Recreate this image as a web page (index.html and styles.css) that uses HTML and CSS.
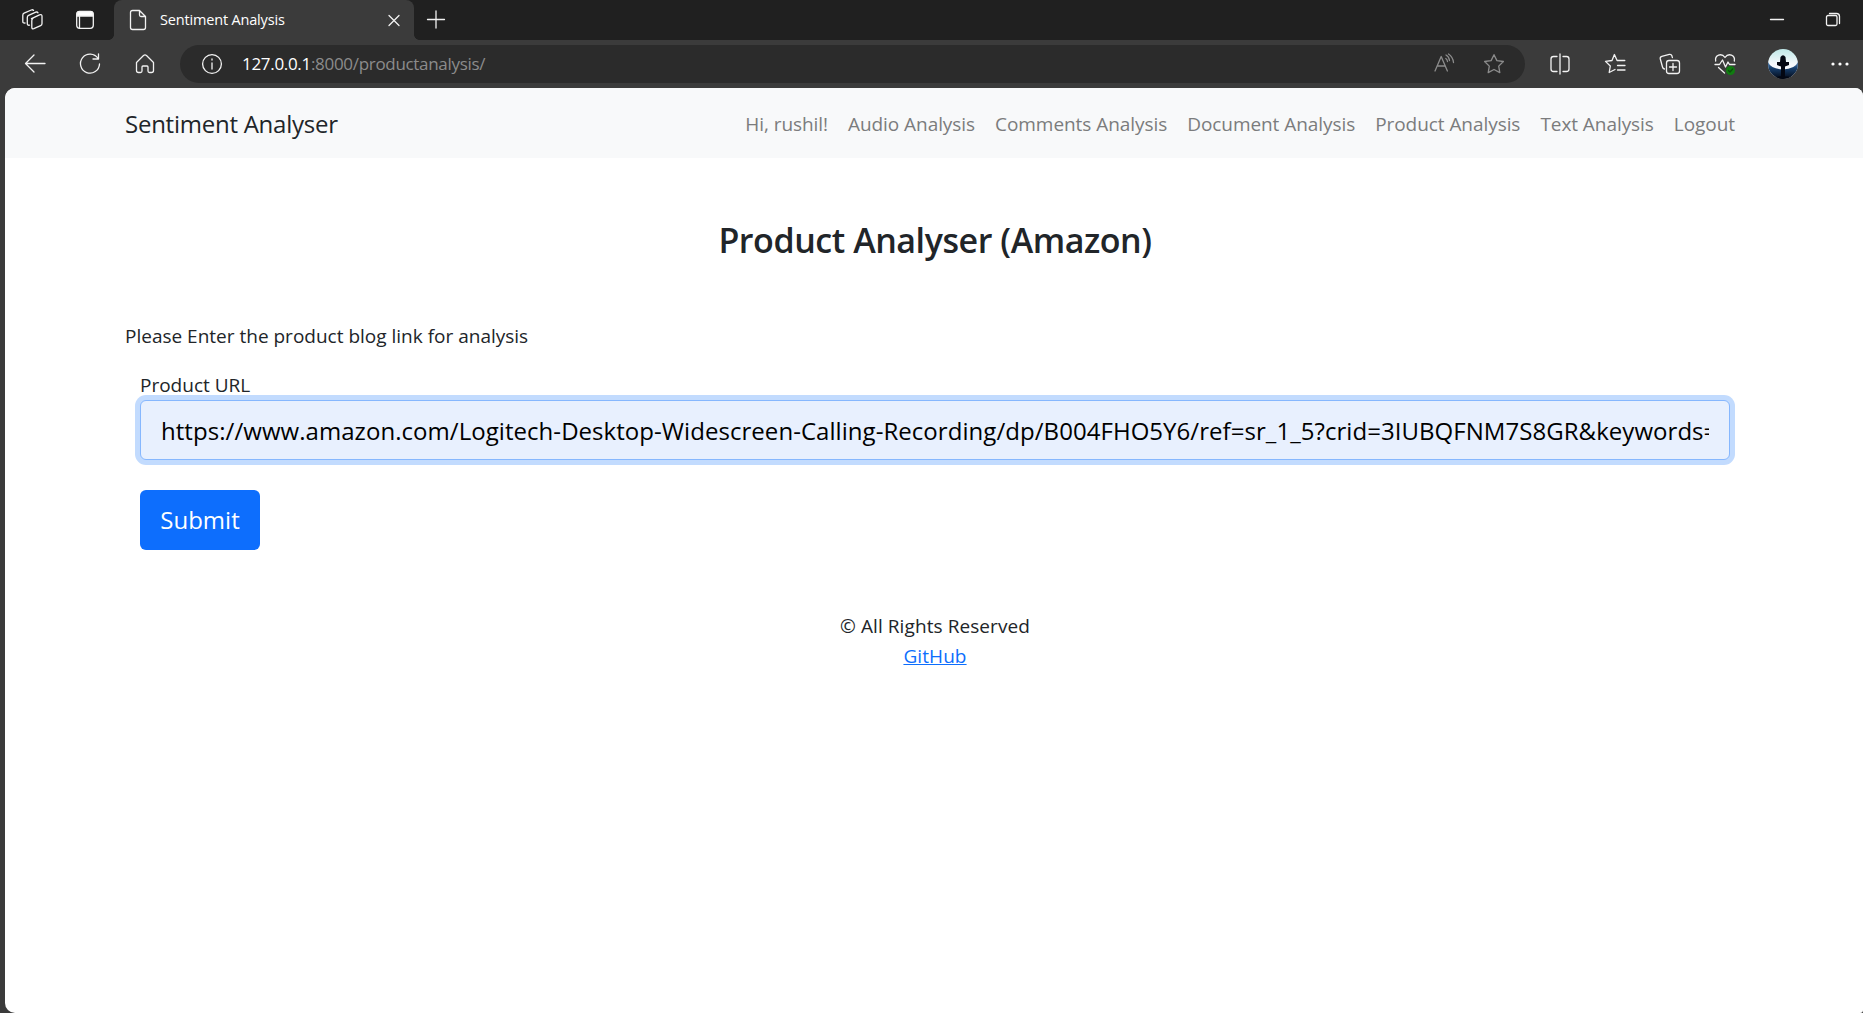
FILE: index.html
```html
<!DOCTYPE html>
<html lang="en">
<head>
<meta charset="utf-8">
<title>Sentiment Analysis</title>
<link rel="stylesheet" href="styles.css">
</head>
<body>
<div class="window">
  <header class="tabbar">
    <svg class="icon workspaces" viewBox="0 0 24 24"><path d="M10.500 10.700l8-3.900q2.500-.8 2.500 1.400v7.200q0 1.600-1.400 2.200l-6.800 3.100q-2 .6-2-1.500v-6.500q0-1.500 1-2.200"/><path d="M8.500 17.200q-2.200.4-2.200-1.600V9.500q0-1.500 1.300-2.100l7.200-3.200q1.500-.6 2.200.6"/><path d="M4 15q-2.200.4-2.200-1.600V7.300q0-1.500 1.300-2.100l7.200-3.200q1.500-.6 2.200.4"/></svg>
    <svg class="icon tabactions" viewBox="0 0 24 24"><rect x="3.700" y="3.700" width="16.600" height="16.600" rx="3"/><path class="solid" d="M4 8V6q0-2.500 2.500-2.500h11Q20 3.500 20 6v2z"/><path d="M6.500 8v12"/></svg>
    <div class="tab">
      <svg class="icon" viewBox="0 0 24 24"><path d="M6.500 2.500h7l6 6v11q0 2-2 2h-11q-2 0-2-2v-15q0-2 2-2zM13.500 2.500v4.500q0 1.500 1.500 1.500h4.500"/></svg>
      <span class="tab-title">Sentiment Analysis</span>
      <svg class="icon" viewBox="0 0 24 24"><path d="M7 7.500l10 10M17 7.500l-10 10"/></svg>
    </div>
    <svg class="icon plus" viewBox="0 0 24 24"><path d="M12 3v17M3.500 11.500h17"/></svg>
    <svg class="icon minimize" viewBox="0 0 24 24"><path d="M5.500 11.500h13"/></svg>
    <svg class="icon restore" viewBox="0 0 24 24"><rect x="5.500" y="7.500" width="10.500" height="10" rx="1.500"/><path d="M8.500 5.500h7q3 0 3 3v7"/></svg>
  </header>
  <div class="toolbar">
    <svg class="icon" viewBox="0 0 24 24"><path d="M22 11.500H2.500M11 3l-8.500 8.500L11 20"/></svg>
    <svg class="icon" viewBox="0 0 24 24"><path d="M20 6.500A9.500 9.500 0 1 0 21.500 12M20.500 1.800v5.200h-5.500"/></svg>
    <svg class="icon" viewBox="0 0 24 24"><path d="M3.500 10.500L10.500 3.500q1.500-1.200 3 0l7 7v8q0 2-2 2h-2q-1.500 0-1.500-1.500v-4q0-1-1-1h-4q-1 0-1 1v4q0 1.500-1.500 1.500h-2q-2 0-2-2z"/></svg>
    <div class="address">
      <svg class="icon" viewBox="0 0 24 24"><circle cx="12" cy="12" r="9.400"/><path d="M12 11v6M12 7v1"/></svg>
      <span class="url"><b>127.0.0.1</b>:8000/productanalysis/</span>
      <svg class="icon dim" viewBox="0 0 24 24"><path d="M3 19L9.200 4.500 15.400 19M5.300 14h8M14 3q3 1.500 3.500 5.500M13.800 6.500q1.500 1 1.700 3M16.500 2q4.500 3 5 8.500"/></svg>
      <svg class="icon dim star" viewBox="0 0 24 24"><path d="M12 2.700l2.900 5.900 6.500.9-4.700 4.600 1.100 6.500-5.800-3.100-5.800 3.100 1.100-6.500-4.700-4.600 6.500-.9z"/></svg>
    </div>
    <svg class="icon split" viewBox="0 0 24 24"><path d="M9 4.500H5.500q-2.500 0-2.500 2.500v10q0 2.500 2.500 2.500H9M15 4.500h3.500q2.500 0 2.500 2.500v10q0 2.500-2.500 2.500H15M12 2v20"/></svg>
    <svg class="icon" viewBox="0 0 24 24"><path d="M12 17.500l-5.800 3 1.100-6.500-4.800-4.600 6.500-.9 2.400-6 2.700 6h7.700M14.500 13.500h7.500M14.500 18h7.500"/></svg>
    <svg class="icon" viewBox="0 0 24 24"><rect x="8.500" y="8.500" width="13" height="13" rx="2.500"/><path d="M15 11.500v7M11.500 15h7M6.500 17q-1.600-.3-2-2L2.300 7q-.5-2 1.500-2.600l7.500-2q2-.4 2.600 1.400l.5 1.800"/></svg>
    <svg class="icon" viewBox="0 0 24 24"><path d="M2.700 9C1.500 3 8.500.5 12 5.500 15.500.5 22.500 3 21.300 9M2 12.500h4.500L9.500 8l3 7 2.500-5 1.500 2.500h5.500M5.500 15.500l6 5.500"/><circle class="badge" cx="17.500" cy="18.500" r="4.500"/><path class="check" d="M15.500 18.500l1.500 1.500 2.700-3"/></svg>
    <svg class="avatar" viewBox="0 0 30 30">
      <defs>
        <clipPath id="round"><circle cx="15" cy="15" r="15"/></clipPath>
        <linearGradient id="sky" x1="0" y1="0" x2="0" y2="1"><stop offset="0" stop-color="#bfe8e8"/><stop offset=".5" stop-color="#f5f8fc"/></linearGradient>
        <linearGradient id="sea" x1="0" y1="0" x2="0" y2="1"><stop offset="0" stop-color="#5c84ae"/><stop offset=".35" stop-color="#17406f"/><stop offset="1" stop-color="#030814"/></linearGradient>
      </defs>
      <g clip-path="url(#round)">
        <path fill="url(#sky)" d="M0 0h30v30H0z"/>
        <path fill="url(#sea)" d="M0 13q3 7 15 7.500Q27 20 30 13v17H0z"/>
        <path fill="#030712" d="M12.500 8q2.500-3.500 5 0l.5 5h3v3l-4 1.500V30h-4V17.500L9 16v-3h3zM4 30q5-3 11-3t11 3z"/>
      </g>
    </svg>
    <svg class="icon dots" viewBox="0 0 24 24"><circle cx="5" cy="12" r="1.600"/><circle cx="12" cy="12" r="1.600"/><circle cx="19" cy="12" r="1.600"/></svg>
  </div>
  <div class="page">
    <nav class="navbar">
      <a class="brand">Sentiment Analyser</a>
      <div class="links">
        <a>Hi, rushil!</a>
        <a>Audio Analysis</a>
        <a>Comments Analysis</a>
        <a>Document Analysis</a>
        <a>Product Analysis</a>
        <a>Text Analysis</a>
        <a>Logout</a>
      </div>
    </nav>
    <main>
      <h1>Product Analyser (Amazon)</h1>
      <p class="intro">Please Enter the product blog link for analysis</p>
      <form>
        <label for="url">Product URL</label>
        <input id="url" class="field" type="text" value="https://www.amazon.com/Logitech-Desktop-Widescreen-Calling-Recording/dp/B004FHO5Y6/ref=sr_1_5?crid=3IUBQFNM7S8GR&amp;keywords=">
        <button type="button">Submit</button>
      </form>
    </main>
    <footer><span>© All Rights Reserved</span><a>GitHub</a></footer>
  </div>
</div>
</body>
</html>
```
FILE: styles.css
```css
* { box-sizing: border-box; }
body {
  margin: 0;
  font-family: "Open Sans", "Noto Sans", sans-serif;
  font-size: 19px;
  line-height: 30px;
  color: #212529;
}
.window {
  width: 1863px;
  height: 1013px;
  background: #3b3b3b;
  display: flex;
  flex-direction: column;
  overflow: hidden;
}
.icon {
  width: 24px;
  height: 24px;
  flex: none;
  fill: none;
  stroke: #f2f2f2;
  stroke-width: 1.3;
  stroke-linecap: round;
  stroke-linejoin: round;
}
.tabbar {
  height: 40px;
  flex: none;
  display: flex;
  align-items: center;
  background: #202020;
}
.workspaces { margin-left: 21px; }
.tabactions { margin-left: 28px; }
.tabactions .solid { fill: #fff; }
.tab {
  position: relative;
  width: 300px;
  height: 40px;
  margin-left: 17px;
  padding: 0 8px 0 12px;
  display: flex;
  align-items: center;
  background: #3b3b3b;
  border-radius: 8px 8px 0 0;
}
/* small flares where the tab meets the toolbar */
.tab::before,
.tab::after {
  content: "";
  position: absolute;
  bottom: 0;
  width: 5px;
  height: 5px;
}
.tab::before {
  left: -5px;
  background: radial-gradient(circle at 0 0, transparent 4.5px, #3b3b3b 5px);
}
.tab::after {
  right: -5px;
  background: radial-gradient(circle at 100% 0, transparent 4.5px, #3b3b3b 5px);
}
.tab-title {
  flex: 1;
  margin-left: 10px;
  font-size: 14.5px;
  letter-spacing: -0.17px;
  color: #fff;
}
.plus { margin-left: 10px; }
.minimize { margin-left: auto; }
.restore { margin: 0 18px 0 32px; }
.toolbar {
  height: 48px;
  flex: none;
  display: flex;
  align-items: center;
  gap: 31px;
  padding-left: 23px;
}
.address {
  width: 1345px;
  height: 38px;
  margin-left: -8px;
  padding: 0 19px 0 20px;
  display: flex;
  align-items: center;
  background: #2b2b2b;
  border-radius: 19px;
}
.url {
  flex: 1;
  margin-left: 18px;
  font-size: 17px;
  letter-spacing: -0.31px;
  color: #8c8c8c;
}
.url b { font-weight: 400; color: #fff; }
.dim { stroke: #8c8c8c; }
.star { margin-left: 26px; }
.split { margin-left: -8px; }
.icon .badge { fill: #107c10; stroke: none; }
.icon .check { stroke: #0a4d0a; }
.avatar { width: 30px; height: 30px; flex: none; }
.dots { margin-left: -1px; fill: #fff; stroke: none; }
.page {
  flex: 1;
  margin-left: 5px;
  background: #fff;
  border-radius: 10px 8px 3px 10px;
  overflow: hidden;
}
.navbar {
  height: 70px;
  padding: 2px 128px 0 120px;
  display: flex;
  align-items: center;
  justify-content: space-between;
  background: #f8f9fa;
}
.brand { font-size: 24px; letter-spacing: -0.25px; }
.links {
  display: flex;
  gap: 20px;
  letter-spacing: -0.06px;
  color: #7b7c7d;
}
main { padding: 61px 118px 0 120px; }
h1 {
  margin: 0;
  font-size: 34px;
  line-height: 42px;
  font-weight: 600;
  letter-spacing: -0.44px;
  text-align: center;
}
.intro { margin: 60px 0 20px; }
form { padding: 0 15px; }
label { display: block; line-height: 29px; }
.field {
  display: block;
  width: 100%;
  height: 60px;
  padding: 0 20px;
  font: inherit;
  font-size: 24px;
  letter-spacing: 0.05px;
  color: #000;
  background: #e8f0fe;
  border: 1px solid #86b7fe;
  border-radius: 6px;
  box-shadow: 0 0 0 5px #c2dbfe;
}
button {
  display: block;
  width: 120px;
  height: 60px;
  margin-top: 30px;
  padding: 0;
  font: inherit;
  font-size: 24px;
  color: #fff;
  background: #0d6efd;
  border: 0;
  border-radius: 6px;
}
footer {
  margin-top: 61px;
  padding-left: 2px;
  display: flex;
  flex-direction: column;
  align-items: center;
  letter-spacing: 0.08px;
}
footer a { color: #0d6efd; text-decoration: underline; }
```
